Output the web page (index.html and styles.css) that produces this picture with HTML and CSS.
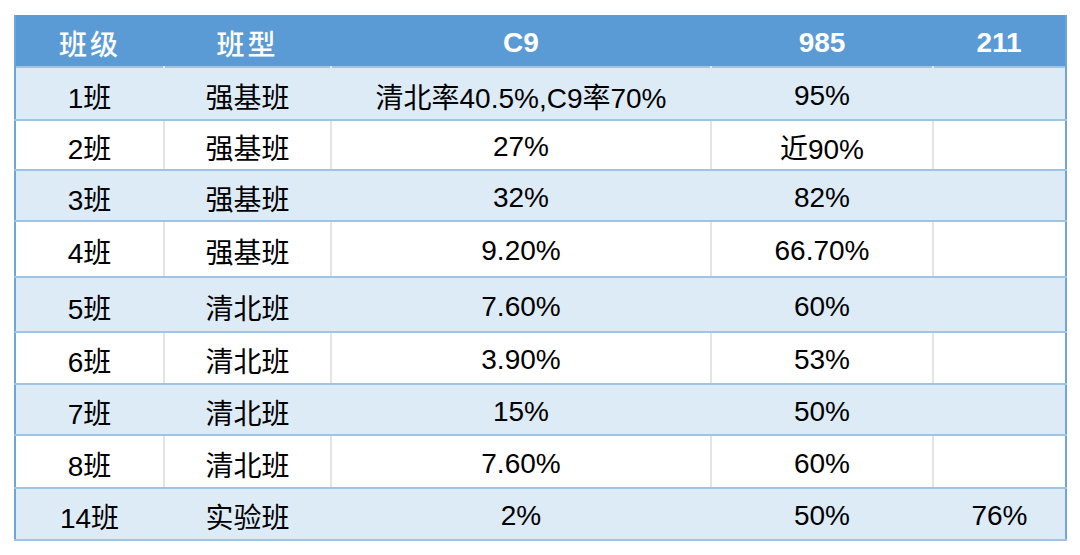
FILE: index.html
```html
<!DOCTYPE html>
<html lang="zh-CN">
<head>
<meta charset="utf-8">
<title>班级升学率</title>
<link rel="stylesheet" href="styles.css">
</head>
<body>
<table class="grid">
  <colgroup>
    <col class="c1"><col class="c2"><col class="c3"><col class="c4"><col class="c5">
  </colgroup>
  <thead>
    <tr class="head">
      <th class="cjk">班级</th>
      <th class="cjk">班型</th>
      <th>C9</th>
      <th>985</th>
      <th>211</th>
    </tr>
  </thead>
  <tbody>
    <tr class="blue h53"><td>1班</td><td>强基班</td><td>清北率40.5%,C9率70%</td><td>95%</td><td></td></tr>
    <tr class="white h50"><td>2班</td><td>强基班</td><td>27%</td><td>近90%</td><td></td></tr>
    <tr class="blue h51"><td>3班</td><td>强基班</td><td>32%</td><td>82%</td><td></td></tr>
    <tr class="white h56"><td>4班</td><td>强基班</td><td>9.20%</td><td>66.70%</td><td></td></tr>
    <tr class="blue h55"><td>5班</td><td>清北班</td><td>7.60%</td><td>60%</td><td></td></tr>
    <tr class="white h52"><td>6班</td><td>清北班</td><td>3.90%</td><td>53%</td><td></td></tr>
    <tr class="blue h51"><td>7班</td><td>清北班</td><td>15%</td><td>50%</td><td></td></tr>
    <tr class="white h53"><td>8班</td><td>清北班</td><td>7.60%</td><td>60%</td><td></td></tr>
    <tr class="blue h52"><td>14班</td><td>实验班</td><td>2%</td><td>50%</td><td>76%</td></tr>
  </tbody>
</table>
</body>
</html>
```

FILE: styles.css
```css
html, body {
  margin: 0;
  background: #ffffff;
}

body {
  padding: 15px 0 0 14px;
  font-family: "Liberation Sans", "Noto Sans CJK SC", sans-serif;
}

.grid {
  border-collapse: collapse;
  table-layout: fixed;
  width: 1051px;
  border-left: 2px solid #6fa5d9;
  border-right: 2px solid #6fa5d9;
  border-bottom: 2px solid #8fb9e3;
}

.c1 { width: 149px; }
.c2 { width: 167px; }
.c3 { width: 380px; }
.c4 { width: 222px; }
.c5 { width: 133px; }

.head {
  height: 52px;
  background: #5b9bd5;
}

.head th {
  color: #ffffff;
  font-size: 28px;
  font-weight: 700;
  padding: 4px 0 0;
  border: none;
  text-align: center;
  vertical-align: middle;
}

.head th.cjk {
  font-weight: 500;
  letter-spacing: 3px;
}

td {
  padding: 4px 0 0;
  text-align: center;
  vertical-align: middle;
  font-size: 28px;
  color: #000000;
  border-top: 2px solid #9dc3e6;
  border-bottom: 2px solid #9dc3e6;
}

.blue { background: #ddebf7; }
.blue td {
  border-left: 2px solid #ddebf7;
  border-right: 2px solid #ddebf7;
}

.white { background: #ffffff; }
.white td {
  border-left: 2px solid #e4e4e4;
  border-right: 2px solid #e4e4e4;
}

.white td:first-child { border-left-color: #6fa5d9; }
.white td:last-child { border-right-color: #6fa5d9; }
.blue td:first-child { border-left-color: #6fa5d9; }
.blue td:last-child { border-right-color: #6fa5d9; }

.h50 { height: 50px; }
.h51 { height: 51px; }
.h52 { height: 52px; }
.h53 { height: 53px; }
.h55 { height: 55px; }
.h56 { height: 56px; }
```
